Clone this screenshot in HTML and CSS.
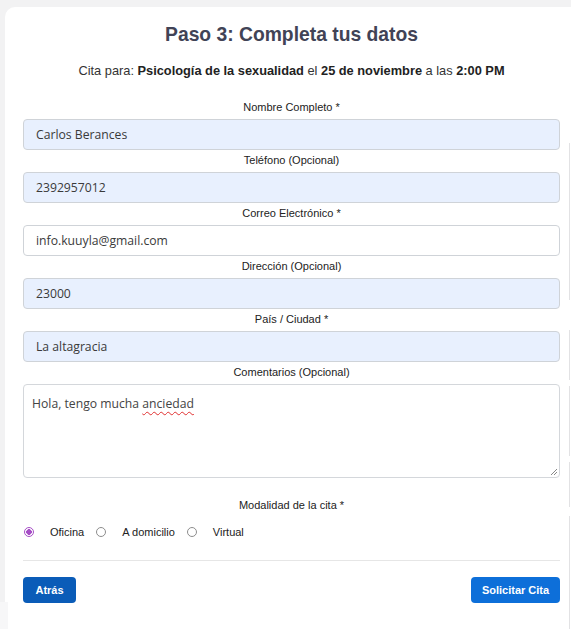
FILE: index.html
```html
<!DOCTYPE html>
<html lang="es">
<head>
<meta charset="utf-8">
<title>Paso 3</title>
<link rel="stylesheet" href="styles.css">
</head>
<body>
<div class="edge">
  <span class="seg s1"></span><span class="seg s2"></span><span class="seg s3"></span><span class="seg s4"></span><span class="seg s5"></span>
</div>
<main class="card">
  <h2 class="title">Paso 3: Completa tus datos</h2>
  <p class="summary">Cita para: <b>Psicología de la sexualidad</b> el <b>25 de noviembre</b> a las <b>2:00 PM</b></p>
  <form class="form">
    <div class="field">
      <label class="label">Nombre Completo *</label>
      <div class="input filled">Carlos Berances</div>
    </div>
    <div class="field">
      <label class="label">Teléfono (Opcional)</label>
      <div class="input filled">2392957012</div>
    </div>
    <div class="field">
      <label class="label">Correo Electrónico *</label>
      <div class="input">info.kuuyla@gmail.com</div>
    </div>
    <div class="field">
      <label class="label">Dirección (Opcional)</label>
      <div class="input filled">23000</div>
    </div>
    <div class="field">
      <label class="label">País / Ciudad *</label>
      <div class="input filled">La altagracia</div>
    </div>
    <div class="field">
      <label class="label">Comentarios (Opcional)</label>
      <div class="textarea">Hola, tengo mucha <span class="typo">anciedad</span>
        <svg class="grip" width="10" height="10" viewBox="0 0 10 10"><path d="M9 3 L3 9 M9 6 L6 9" stroke="#888" stroke-width="1" fill="none"/></svg>
      </div>
    </div>
    <div class="mode">
      <div class="label mode-label">Modalidad de la cita *</div>
      <div class="radios">
        <span class="radio checked"></span><span class="opt">Oficina</span>
        <span class="radio"></span><span class="opt">A domicilio</span>
        <span class="radio"></span><span class="opt">Virtual</span>
      </div>
    </div>
    <div class="actions">
      <button type="button" class="btn back">Atrás</button>
      <button type="button" class="btn submit">Solicitar Cita</button>
    </div>
  </form>
</main>
<div class="under"></div>
</body>
</html>
```
FILE: styles.css
```css
html, body {
  margin: 0;
  padding: 0;
}
body {
  background: #f2f2f3;
  width: 571px;
  height: 629px;
  overflow: hidden;
  position: relative;
  font-family: "Liberation Sans", Arial, sans-serif;
}
.card {
  box-sizing: border-box;
  background: #fff;
  margin: 7px 0 0 5px;
  width: 573px;
  height: 622px;
  overflow: hidden;
  padding: 16px 18px 0 18px;
  border-radius: 10px 0 0 0;
}
.title {
  margin: 0;
  text-align: center;
  font-size: 19.3px;
  font-weight: bold;
  color: #414356;
  line-height: 24px;
}
.summary {
  margin: 16px 0 0 0;
  text-align: center;
  font-size: 12.8px;
  color: #333;
  line-height: 16px;
}
.summary b {
  font-weight: bold;
  color: #222;
}
.form {
  margin-top: 22px;
  display: flex;
  flex-direction: column;
}
.field {
  display: flex;
  flex-direction: column;
  margin-bottom: 4px;
}
.label {
  display: block;
  text-align: center;
  font-size: 11px;
  line-height: 13px;
  color: #222;
  margin-bottom: 5px;
}
.input {
  box-sizing: border-box;
  height: 31px;
  border: 1px solid #cfd3d8;
  border-radius: 4px;
  padding: 0 12px;
  display: flex;
  align-items: center;
  font-family: "Open Sans", "Noto Sans", sans-serif;
  font-size: 12.2px;
  color: #3a3a3a;
  background: #fff;
}
.input.filled {
  background: #e8f0fe;
}
.textarea {
  box-sizing: border-box;
  height: 94px;
  border: 1px solid #d4d7db;
  border-radius: 4px;
  padding: 10px 8px;
  font-family: "Open Sans", "Noto Sans", sans-serif;
  font-size: 12.2px;
  color: #444;
  position: relative;
  line-height: 18px;
}
.typo {
  text-decoration: underline wavy #e03030;
  text-decoration-thickness: 1px;
  text-underline-offset: 3px;
}
.grip {
  position: absolute;
  right: 1px;
  bottom: 1px;
}
.mode {
  margin-top: 17px;
}
.mode-label {
  margin-bottom: 14px;
}
.radios {
  display: flex;
  align-items: center;
  padding-left: 1px;
  font-size: 11px;
  color: #222;
}
.radio {
  box-sizing: border-box;
  width: 10px;
  height: 10px;
  border-radius: 50%;
  border: 1px solid #8d8d8d;
  margin-right: 16px;
  background: #fff;
}
.radio.checked {
  border: 1.5px solid #a64ec6;
  background: radial-gradient(circle, #a64ec6 0 2.6px, #fff 3px);
}
.opt {
  margin-right: 12px;
}
.actions {
  margin-top: 22px;
  border-top: 1px solid #e6e6e6;
  padding-top: 16px;
  display: flex;
  justify-content: space-between;
  width: 537px;
}
.btn {
  border: none;
  border-radius: 4px;
  height: 26px;
  color: #fff;
  font-family: "Liberation Sans", Arial, sans-serif;
  font-weight: bold;
  font-size: 11px;
  padding: 0 10px;
  cursor: pointer;
}
.back {
  background: #0a5cb8;
  width: 53px;
}
.submit {
  background: #0d6fd9;
  width: 89px;
}
.edge {
  position: absolute;
  right: 1px;
  top: 0;
  width: 1px;
  height: 629px;
  z-index: 2;
}
.seg {
  position: absolute;
  left: 0;
  width: 1px;
  background: #e2e2e4;
}
.s1 { top: 143px; height: 157px; }
.s2 { top: 330px; height: 50px; }
.s3 { top: 386px; height: 70px; }
.s4 { top: 462px; height: 45px; }
.s5 { top: 516px; height: 113px; }
.under {
  position: absolute;
  left: 0;
  top: 602px;
  width: 8px;
  height: 27px;
  background: #f7f7f8;
}
```
